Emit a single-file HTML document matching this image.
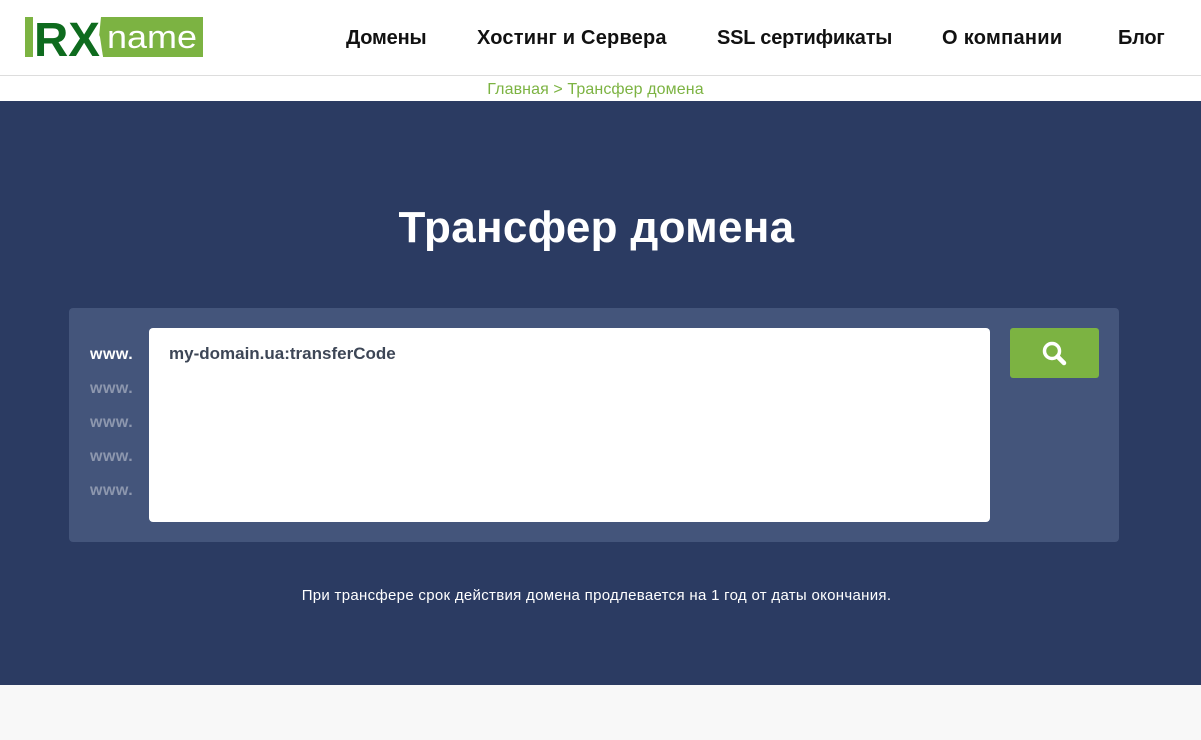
<!DOCTYPE html>
<html><head><meta charset="utf-8"><style>
*{margin:0;padding:0;box-sizing:border-box}
body{width:1201px;height:740px;overflow:hidden;font-family:"Liberation Sans",sans-serif;background:#f8f8f8}
.hdr{height:76px;background:#fff;border-bottom:1px solid #ddd;position:relative}
.nav a{position:absolute;top:27px;font-size:20px;color:#111;text-decoration:none;font-weight:bold;letter-spacing:-0.2px}
.bc{height:25px;background:#fff;text-align:center;color:#7cb342;font-size:16px;line-height:27px;letter-spacing:0.1px;padding-right:10px}
.hero{background:#2b3b62;height:584px;position:relative}
h1{position:absolute;top:102px;width:100%;text-align:center;color:#fff;font-size:44px;font-weight:bold;letter-spacing:0.3px;padding-right:8px}
.box{position:absolute;left:69px;top:207px;width:1050px;height:234px;background:#44557b;border-radius:4px}
.ta{position:absolute;left:80px;top:20px;width:841px;height:194px;background:#fff;border-radius:4px;padding:16px 20px;color:#3d4656;font-size:17px;font-weight:bold}
.w{position:absolute;left:21px;font-size:16px;font-weight:bold;color:#8d97ae;letter-spacing:0.5px}
.btn{position:absolute;left:941px;top:20px;width:89px;height:50px;background:#7cb342;border-radius:3px}
.note{position:absolute;top:486px;width:100%;text-align:center;color:#fff;font-size:15px;letter-spacing:0.3px;padding-right:8px}
</style></head><body>
<div class="hdr">
<svg style="position:absolute;left:25px;top:17px" width="178" height="40" viewBox="0 0 178 40">
<rect x="0" y="0" width="178" height="40" fill="#7cb342"/>
<polygon points="8,0 66,0 75,20 78,40 8,40" fill="#fff"/>
<polygon points="66,0 76,0 74,20 78,40 70,40 62,20" fill="#fff"/>
<text x="9" y="39" font-family="Liberation Sans" font-weight="bold" font-size="48" fill="#0e6b1e" textLength="66" lengthAdjust="spacingAndGlyphs">RX</text>
<text x="82" y="31" font-family="Liberation Sans" font-size="32" fill="#fff" textLength="90" lengthAdjust="spacingAndGlyphs">name</text>
</svg>
<div class="nav">
<a style="left:346px">Домены</a>
<a style="left:477px;letter-spacing:0.2px">Хостинг и Сервера</a>
<a style="left:717px">SSL сертификаты</a>
<a style="left:942px;letter-spacing:0.3px">О компании</a>
<a style="left:1118px">Блог</a>
</div></div>
<div class="bc">Главная &gt; Трансфер домена</div>
<div class="hero">
<h1>Трансфер домена</h1>
<div class="box">
<div class="w" style="top:38px;color:#fff">www.</div>
<div class="w" style="top:72px">www.</div>
<div class="w" style="top:106px">www.</div>
<div class="w" style="top:140px">www.</div>
<div class="w" style="top:174px">www.</div>
<div class="ta">my-domain.ua:transferCode</div>
<div class="btn"><svg width="89" height="50" viewBox="0 0 89 50"><circle cx="42" cy="23" r="7.5" fill="none" stroke="#fff" stroke-width="3.5"/><line x1="47.5" y1="28.5" x2="54" y2="35" stroke="#fff" stroke-width="4.5" stroke-linecap="round"/></svg></div>
</div>
<div class="note">При трансфере срок действия домена продлевается на 1 год от даты окончания.</div>
</div>
</body></html>
